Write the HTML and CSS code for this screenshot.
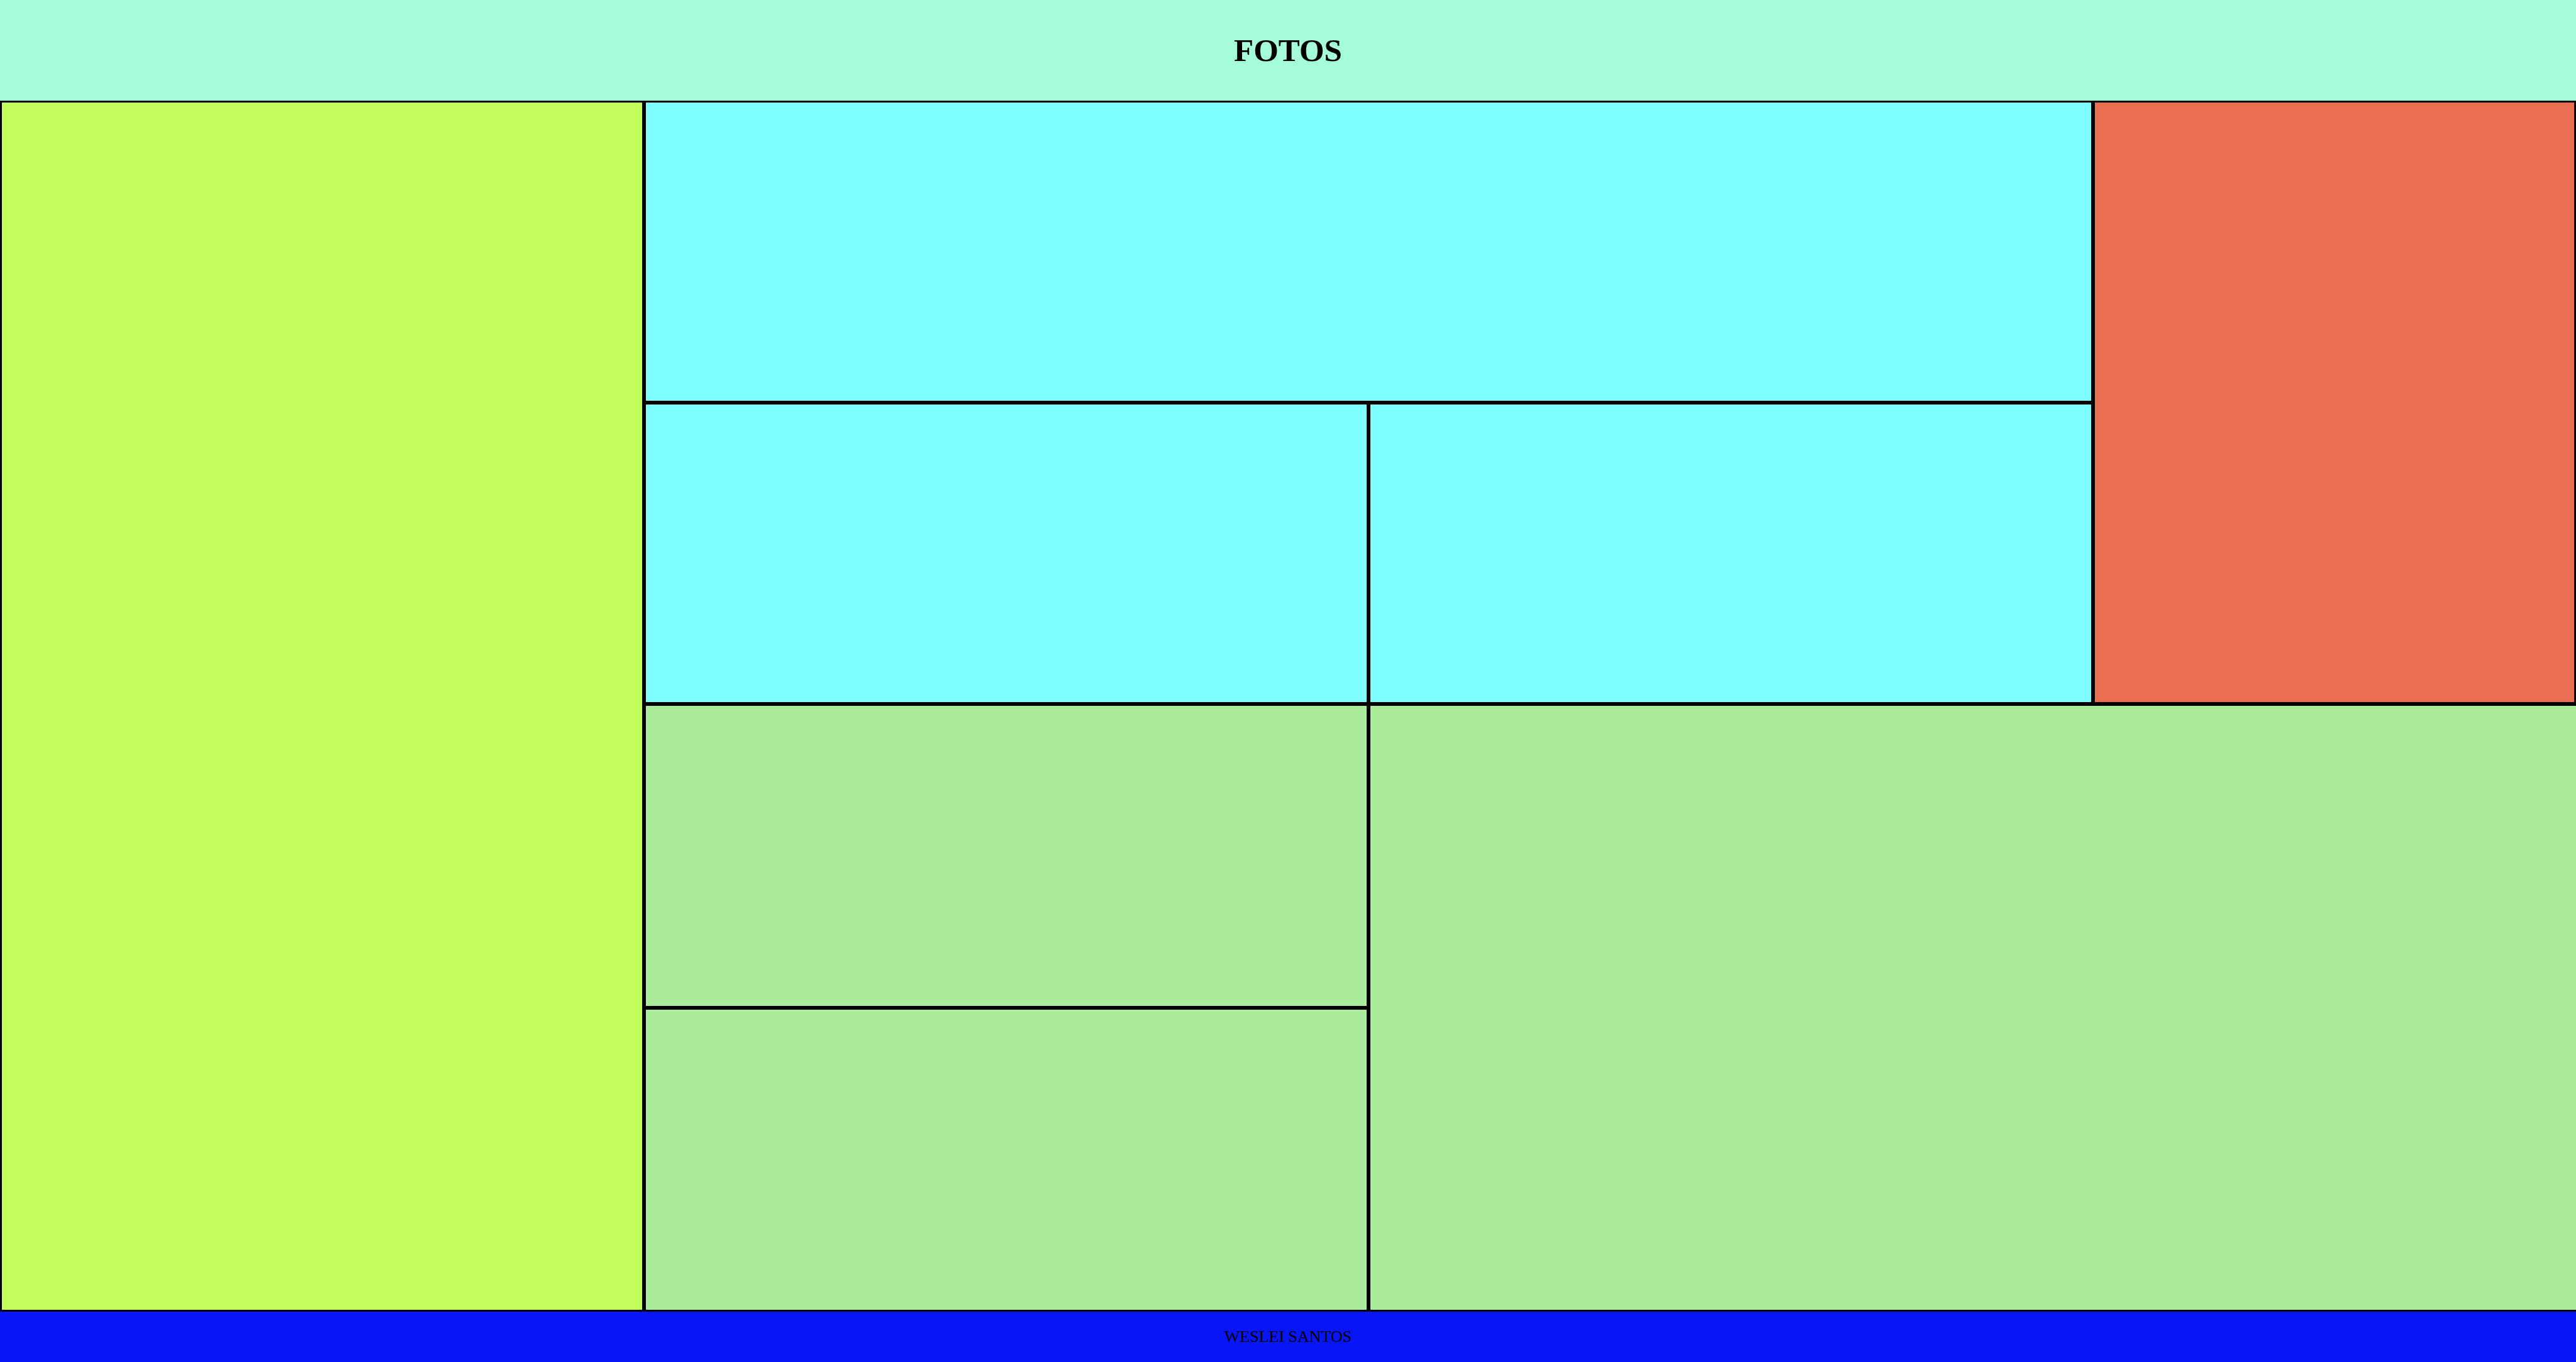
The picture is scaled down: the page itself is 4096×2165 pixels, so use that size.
FILE: index.html
```html
<!DOCTYPE html>
<html lang="pt-BR">
<head>
  <meta charset="UTF-8">
  <meta name="viewport" content="width=device-width, initial-scale=1">
  <title>Fotos</title>
  <link rel="stylesheet" href="styles.css">
</head>
<body>
  <header class="header">
    <h1 class="title">FOTOS</h1>
  </header>
  <main class="gallery">
    <section class="cell side"></section>
    <section class="cell banner"></section>
    <section class="cell sky"></section>
    <section class="cell sky"></section>
    <section class="cell coral"></section>
    <section class="cell leaf"></section>
    <section class="cell leaf feature"></section>
    <section class="cell leaf"></section>
  </main>
  <footer class="footer">
    <p class="author">WESLEI SANTOS</p>
  </footer>
</body>
</html>
```
FILE: styles.css
```css
* {
  box-sizing: border-box;
  margin: 0;
  padding: 0;
}

body {
  display: flex;
  flex-direction: column;
  min-height: 100vh;
  font-family: "Liberation Serif", "Times New Roman", serif;
  color: #000;
}

.header {
  display: flex;
  align-items: center;
  justify-content: center;
  height: 160px;
  background: #a4fcd8;
}

.title {
  font-size: 51px;
  line-height: 60px;
}

.gallery {
  flex: 1;
  display: grid;
  grid-template-columns: 8fr 9fr 9fr 6fr;
  grid-template-rows: 480fr 479fr 483fr 483fr;
}

.cell {
  border: 3px solid #000;
}

.side {
  grid-column: 1;
  grid-row: 1 / 5;
  background: #c3fd5c;
}

.banner {
  grid-column: 2 / 4;
  grid-row: 1;
  background: #7dfdfe;
}

.sky {
  grid-row: 2;
  background: #7dfdfe;
}

.coral {
  grid-column: 4;
  grid-row: 1 / 3;
  background: #ea6e51;
}

.leaf {
  grid-column: 2;
  background: #aaec9b;
}

.feature {
  grid-column: 3 / 5;
  grid-row: 3 / 5;
  border-right: 0;
}

.footer {
  display: flex;
  align-items: center;
  justify-content: center;
  height: 80px;
  background: #0816f7;
}

.author {
  font-size: 26px;
  line-height: 30px;
}
```
